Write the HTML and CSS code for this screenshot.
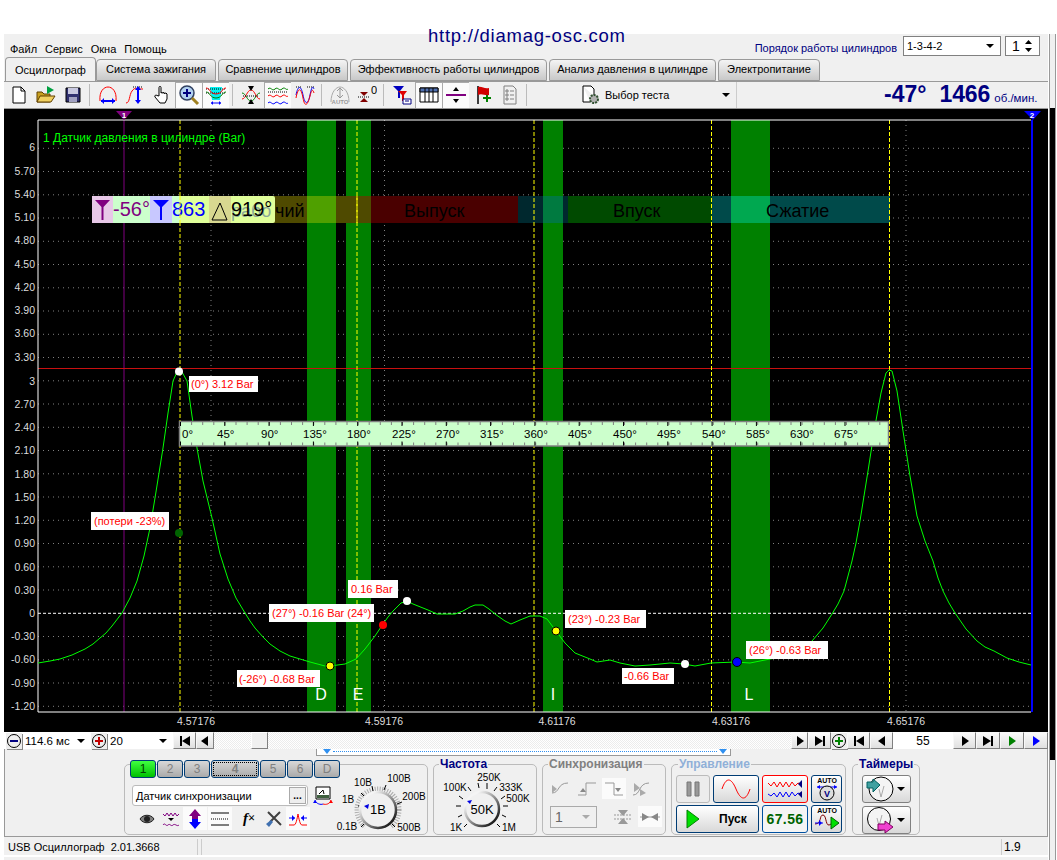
FILE: index.html
```html
<!DOCTYPE html>
<html lang="ru">
<head>
    <meta charset="UTF-8">
    <title>USB Осциллограф</title>
    <link rel="stylesheet" href="styles.css">
</head>
<body>

<svg class="defs">
    <symbol id="tri-r" viewBox="0 0 12 12"><path d="M3 1l7 5-7 5z"/></symbol>
    <symbol id="tri-l" viewBox="0 0 12 12"><path d="M9 1L2 6l7 5z"/></symbol>
    <symbol id="end-r" viewBox="0 0 12 12"><path d="M1 1l8 5-8 5zM9 1h2v10H9z"/></symbol>
    <symbol id="end-l" viewBox="0 0 12 12"><path d="M11 1L3 6l8 5zM1 1h2v10H1z"/></symbol>
    <symbol id="round-minus" viewBox="0 0 16 16"><circle cx="8" cy="8" r="6.5" fill="#eee" stroke="#000"/><path d="M4 7h8v2H4z" fill="#000080"/></symbol>
    <symbol id="round-plus" viewBox="0 0 16 16"><circle cx="8" cy="8" r="6.5" fill="#eee" stroke="#000"/><path d="M4 7h3V4h2v3h3v2H9v3H7V9H4z" fill="#c00000"/></symbol>
    <symbol id="round-plus-g" viewBox="0 0 16 16"><circle cx="8" cy="8" r="6.5" fill="#eee" stroke="#000"/><path d="M4 7h3V4h2v3h3v2H9v3H7V9H4z" fill="#008000"/></symbol>
</svg>

<div class="site-url">http://diamag-osc.com</div>

<div class="page">
    <div class="app">

        <!-- Menu -->
        <div class="menu-row">
            <div class="menu">
                <span>Файл</span><span>Сервис</span><span>Окна</span><span>Помощь</span>
            </div>
            <div class="order">
                <span class="order-label">Порядок работы цилиндров</span>
                <div class="combo order-combo"><span>1-3-4-2</span><i class="caret"></i></div>
                <div class="combo order-spin"><span>1</span>
                    <svg width="9" height="14" viewBox="0 0 9 14"><path d="M4.5 1L8 5H1zM1 9h7l-3.500 4z"/></svg>
                </div>
            </div>
        </div>

        <!-- Tabs -->
        <div class="tabs">
            <div class="tab active">Осциллограф</div>
            <div class="tab t-ign">Система зажигания</div>
            <div class="tab t-cmp">Сравнение цилиндров</div>
            <div class="tab t-eff">Эффективность работы цилиндров</div>
            <div class="tab t-prs">Анализ давления в цилиндре</div>
            <div class="tab t-pwr">Электропитание</div>
        </div>

        <!-- Toolbar -->
        <div class="toolbar">
            <div class="tool"><svg width="20" height="20" viewBox="0 0 20 20"><path d="M4 2h8l4 4v12H4z" fill="#fff" stroke="#000"/><path d="M12 2v4h4" fill="none" stroke="#000"/></svg></div>
            <div class="tool"><svg width="20" height="20" viewBox="0 0 20 20"><path d="M1 17V7h5l2 2h6v8z" fill="#c8a020" stroke="#604000"/><path d="M1 17l3-6h15l-4 6z" fill="#f0d060" stroke="#604000"/><path d="M11 1l7 4-7 4z" fill="#00a040"/></svg></div>
            <div class="tool"><svg width="20" height="20" viewBox="0 0 20 20"><path d="M3 3h14v14H3z" fill="#303070" stroke="#000"/><path d="M5 3h10v6H5z" fill="#c8c8e0"/><path d="M6 12h8v5H6z" fill="#a0a0c0"/></svg></div>
            <div class="tool-sep"></div>
            <div class="tool"><svg width="20" height="20" viewBox="0 0 20 20"><path d="M2 16C1 6 6 2 10 2s9 4 8 14" class="i-r"/><path d="M3 16h14" class="i-b2"/><path d="M3 16l3-3v6zM17 16l-3-3v6z" class="f-b"/></svg></div>
            <div class="tool"><svg width="20" height="20" viewBox="0 0 20 20"><path d="M1 18c4 0 3-8 6-12s4-2 5-2 5 0 6 0" class="i-r"/><path d="M8 2h10" class="i-d"/><path d="M13 4v12" class="i-b2"/><path d="M13 1l-3 4h6zM13 19l-3-4h6z" class="f-b"/></svg></div>
            <div class="tool"><svg width="20" height="20" viewBox="0 0 20 20"><path d="M7 11V2.500c0-1.500 2-1.500 2 0V8l1-.5V8l2-.5V8.500l2-.5 1 1v5l-2 4H8l-5-6c-1-1.500 1-2.500 2-1.500z" fill="#fff" stroke="#000"/></svg></div>
            <div class="tool pressed"><svg width="22" height="22" viewBox="0 0 22 22"><circle cx="9" cy="9" r="7" fill="#b0d0f0" stroke="#304060" stroke-width="1.500"/><path d="M5 8h3V5h2v3h3v2h-3v3H8v-3H5z" fill="#000080"/><path d="M14 14l6 6" stroke="#a08020" stroke-width="3"/></svg></div>
            <div class="tool pressed"><svg width="22" height="22" viewBox="0 0 22 22"><path d="M5 3h12l-2 13H7z" fill="#00f0f0"/><path d="M1 5h20M1 9h20" class="i-d"/><path d="M1 4c4 0 4 6 10 6s6-6 10-6" class="i-r"/><path d="M1 8c4 0 4 6 10 6s6-6 10-6" class="i-g"/><path d="M6 19h10" class="i-b"/><path d="M6 19l2-2v4zM16 19l-2-2v4z" class="f-b"/></svg></div>
            <div class="tool-sep"></div>
            <div class="tool"><svg width="20" height="20" viewBox="0 0 20 20"><path d="M1 8c4 0 5 8 9 8s5-8 9-8" class="i-g"/><path d="M1 14c4 0 5-9 9-9s5 9 9 9" class="i-r"/><path d="M2 11h16" class="i-d"/><path d="M10 6L7 1h6zM10 14l-3 5h6z"/></svg></div>
            <div class="tool pressed"><svg width="22" height="22" viewBox="0 0 22 22"><path d="M1 5c3-3 4 3 7 0s4 3 7 0 4 2 6 0" class="i-g"/><path d="M1 12c3-3 4 3 7 0s4 3 7 0 4 2 6 0" class="i-r"/><path d="M1 19c3-3 4 3 7 0s4 3 7 0 4 2 6 0" class="i-b"/><path d="M1 8h20" class="i-d"/></svg></div>
            <div class="tool"><svg width="20" height="20" viewBox="0 0 20 20"><path d="M1 2h6M12 2h7" class="i-d"/><path d="M1 10C3 0 6 0 8 10s5 10 7 0 3-8 4-6" class="i-b"/><path d="M1 13c2-11 5-11 7 0s5 6 7-2 3-6 4-3" class="i-r"/></svg></div>
            <div class="tool-sep"></div>
            <div class="tool"><svg width="20" height="20" viewBox="0 0 20 20"><path d="M1 17C1 7 6 2 10 2s9 5 9 15" fill="none" stroke="#aaa"/><path d="M10 3v9M7 6l3-3 3 3M7 10l3 3 3-3" fill="none" stroke="#999"/><text x="10" y="19" class="auto-small">AUTO</text></svg></div>
            <div class="tool"><svg width="20" height="20" viewBox="0 0 20 20"><path d="M1 12h12" class="i-d"/><path d="M7 11L3 7h8zM7 13l-4 4h8z" fill="#800000"/><text x="14" y="9" class="tool-num">0</text></svg></div>
            <div class="tool-sep"></div>
            <div class="tool"><svg width="20" height="20" viewBox="0 0 20 20"><path d="M1 1h11L8 6v7H6V6z" fill="#0000c0"/><path d="M6 6h9l-3 4v6h-2v-6z" fill="#e00000"/><path d="M11 14h8v5h-8z" fill="#fff" stroke="#000080"/><path d="M13 16h4" stroke="#000080"/></svg></div>
            <div class="tool pressed"><svg width="22" height="22" viewBox="0 0 22 22"><path d="M2 4h18v14H2z" fill="#fff" stroke="#000"/><path d="M2 4h18v4H2z" fill="#5070b0" stroke="#000"/><path d="M7 4v14M11 4v14M15 4v14" stroke="#000"/></svg></div>
            <div class="tool pressed"><svg width="22" height="22" viewBox="0 0 22 22"><path d="M1 11h20" stroke="#800080" stroke-width="2"/><path d="M11 3L8 7h6zM11 19l-3-4h6z"/></svg></div>
            <div class="tool"><svg width="20" height="20" viewBox="0 0 20 20"><path d="M5 1v18" stroke="#000" stroke-width="1.500"/><path d="M5 2c4-1 6 2 11 1v7c-4 1-7-2-11 0z" fill="#d00000"/><path d="M10 12h3v-2h2v2h3v2h-3v3h-2v-3h-3z" fill="#008000"/></svg></div>
            <div class="tool"><svg width="20" height="20" viewBox="0 0 20 20"><path d="M4 1h9l3 3v15H4z" fill="#f0f0f0" stroke="#808080"/><path d="M6 5h2v2H6zM6 9h2v2H6zM6 13h2v2H6zM10 6h4M10 10h4M10 14h4" fill="none" stroke="#808080"/></svg></div>
            <div class="tool-sep"></div>
            <div class="test-combo">
                <svg width="20" height="20" viewBox="0 0 20 20"><path d="M2 1h8l3 3v7M2 1v16h7" fill="#fff" stroke="#000"/><circle cx="13" cy="14" r="4" fill="#b0b0b0" stroke="#305030" stroke-width="2" stroke-dasharray="2 1"/></svg>
                <span>Выбор теста</span>
                <i class="caret"></i>
            </div>
            <div class="rpm">
                <b class="rpm-angle">-47°</b>
                <b class="rpm-value">1466</b>
                <span>об./мин.</span>
            </div>
        </div>

        <!-- Scope -->
        <svg class="scope" width="1044" height="623" viewBox="4 108 1044 623">
            <g class="grid">
                <path d="M38 147.300H1031M38 170.500H1031M38 193.800H1031M38 217H1031M38 240.300H1031M38 263.500H1031M38 286.800H1031M38 310H1031M38 333.300H1031M38 356.500H1031M38 379.800H1031M38 403H1031M38 426.300H1031M38 449.500H1031M38 472.800H1031M38 496H1031M38 519.300H1031M38 542.500H1031M38 565.800H1031M38 589H1031M38 635.500H1031M38 658.800H1031M38 682H1031M38 705.300H1031"/>
                <path d="M211 119V711M384.500 119V711M558 119V711M731.500 119V711M906 119V711"/>
            </g>

            <path class="band" d="M307 119h29v592h-29zM346 119h25v592h-25zM543 119h20v592h-20zM731 119h39v592h-39z"/>

            <rect x="179" y="195" width="192" height="27" fill="#4f4a00"/>
            <rect x="307" y="195" width="29" height="27" fill="#4fa000"/>
            <rect x="371" y="195" width="147" height="27" fill="#4a0000"/>
            <rect x="518" y="195" width="50" height="27" fill="#00282e"/>
            <rect x="543" y="195" width="20" height="27" fill="#007a40"/>
            <rect x="568" y="195" width="144" height="27" fill="#004a00"/>
            <rect x="712" y="195" width="178" height="27" fill="#004a4a"/>
            <rect x="731" y="195" width="39" height="27" fill="#00a850"/>
            <text x="404" y="216" class="phase">Выпуск</text>
            <text x="613" y="216" class="phase">Впуск</text>
            <text x="766" y="216" class="phase">Сжатие</text>

            <path class="mark-line" d="M124 119V711"/>
            <path class="peak-line" d="M38 367.500H1031"/>
            <path class="zero-line" d="M38 612.300H1031"/>
            <path class="trig-line" d="M180 119V711M357 119V711M534 119V711M711.500 119V711M889.500 119V711"/>

            <path class="axis" d="M1031 119H38V711H1031"/>
            <path class="axis-r" d="M1032 119V711"/>

            <path d="M116 110h16l-8 9z" fill="#800080"/>
            <text x="124" y="117" class="cursor-num">1</text>
            <path d="M1024 110h17l-8 9z" fill="#0000ff"/>
            <text x="1032" y="117" class="cursor-num">2</text>

            <g class="y-labels">
                <text x="35" y="150">6</text>
                <text x="35" y="174">5.70</text>
                <text x="35" y="197">5.40</text>
                <text x="35" y="220">5.10</text>
                <text x="35" y="243">4.80</text>
                <text x="35" y="267">4.50</text>
                <text x="35" y="290">4.20</text>
                <text x="35" y="313">3.90</text>
                <text x="35" y="336">3.60</text>
                <text x="35" y="360">3.30</text>
                <text x="35" y="384">3</text>
                <text x="35" y="407">2.70</text>
                <text x="35" y="430">2.40</text>
                <text x="35" y="453">2.10</text>
                <text x="35" y="477">1.80</text>
                <text x="35" y="500">1.50</text>
                <text x="35" y="523">1.20</text>
                <text x="35" y="546">0.90</text>
                <text x="35" y="570">0.60</text>
                <text x="35" y="593">0.30</text>
                <text x="35" y="616">0</text>
                <text x="35" y="639">-0.30</text>
                <text x="35" y="662">-0.60</text>
                <text x="35" y="686">-0.90</text>
                <text x="35" y="709">-1.20</text>
            </g>

            <g class="x-labels">
                <text x="196" y="724">4.57176</text>
                <text x="384" y="724">4.59176</text>
                <text x="557" y="724">4.61176</text>
                <text x="731" y="724">4.63176</text>
                <text x="906" y="724">4.65176</text>
            </g>

            <text x="43" y="141" class="trace-name">1 Датчик давления в цилиндре (Bar)</text>

            <polyline class="trace" points="38,662 50,660 60,658 72,654 85,648 93,643 100,637 106,632 112,625 122,612 130,597 137,580 144,555 150,527 155,497 159,472 163,447 168,412 173,380 177,371 179,369.500 182,371 187,380 192,415 197,447 203,480 212,517 220,553 228,578 236,597 245,612 250,620 255,627 263,636 270,643 280,650 290,655 300,658 310,661 325,665 330,665 345,663 356,658 365,648 375,635 383,623 388,616 393,610 401,602 407,600 413,603 428,609 437,613 455,613 463,610 470,606 475,604 483,604 489,608 495,613 505,620 511,623 520,619 530,615 540,615 547,618 556,630 565,642 575,652 590,658 597,661 610,659 620,662 635,665 650,664 670,662 684,663 695,665 711,662 736,661 750,662 770,658 790,655 802,648 812,640 823,627 832,613 838,603 844,590 852,560 856,542 860,520 864,495 868,470 875,425 881,392 886,372 889,369 892,370 897,390 903,430 910,475 917,515 925,540 933,560 938,577 943,590 949,602 955,612 966,628 977,640 985,646 994,650 1007,657 1019,661 1031,664"/>

            <!-- Degree ruler -->
            <rect class="ruler" x="179.500" y="420.500" width="709" height="24.500"/>
            <path class="ruler-minor" d="M180 422.500H888M180 443H888"/>
            <path class="ruler-major" d="M180 423H888M180 442.500H888"/>
            <g class="ruler-labels">
                <text x="182" y="437">0°</text>
                <text x="217" y="437">45°</text>
                <text x="261" y="437">90°</text>
                <text x="303" y="437">135°</text>
                <text x="347" y="437">180°</text>
                <text x="392" y="437">225°</text>
                <text x="436" y="437">270°</text>
                <text x="480" y="437">315°</text>
                <text x="524" y="437">360°</text>
                <text x="568" y="437">405°</text>
                <text x="613" y="437">450°</text>
                <text x="657" y="437">495°</text>
                <text x="702" y="437">540°</text>
                <text x="746" y="437">585°</text>
                <text x="790" y="437">630°</text>
                <text x="834" y="437">675°</text>
            </g>

            <!-- Cursor legend -->
            <path d="M92 195h21v27H92z" fill="#e8c8e8"/>
            <path d="M113 195h37v27h-37z" fill="#ccffcc"/>
            <path d="M150 195h22v27h-22z" fill="#c8c8ff"/>
            <path d="M172 195h8v27h-8z" fill="#ccffcc"/>
            <path d="M180 195h29v27h-29z" fill="#e0ff9a"/>
            <path d="M209 195h22v27h-22z" fill="#d8d890"/>
            <path d="M231 195h42a2 2 0 0 1 2 2v23a2 2 0 0 1-2 2h-42z" fill="#e0ff9a"/>
            <path d="M95 199h15l-6.500 7v13h-2v-13z" fill="#800080"/>
            <path d="M153 199h16l-7 7v13h-2v-13z" fill="#0000ff"/>
            <path d="M220 202l-8 17h15z" fill="none" stroke="#000"/>
            <text x="113" y="215" class="legend-val v-purple">-56°</text>
            <text x="172" y="215" class="legend-val v-blue">863</text>
            <text x="231" y="216" class="phase ghost">рабо</text>
            <text x="231" y="215" class="legend-val">919°</text>
            <text x="275" y="216" class="phase">чий</text>
            <path class="trig-line" d="M180 195V222M357 195V222"/>

            <g class="band-names">
                <text x="321" y="699">D</text>
                <text x="358" y="699">E</text>
                <text x="553" y="699">I</text>
                <text x="749" y="699">L</text>
            </g>

            <!-- Markers -->
            <circle cx="179" cy="370.500" r="4" fill="#fff"/>
            <circle cx="179" cy="532" r="4" fill="#006400"/>
            <circle cx="330" cy="665" r="4" fill="#ffff00" stroke="#000"/>
            <circle cx="383" cy="624" r="4" fill="#ff0000"/>
            <circle cx="407" cy="600" r="4" fill="#fff"/>
            <circle cx="556" cy="630" r="4" fill="#ffff00" stroke="#000"/>
            <circle cx="685" cy="663" r="4" fill="#fff"/>
            <circle cx="737" cy="661" r="4.500" fill="#0000ff" stroke="#000"/>

            <!-- Value labels -->
            <g class="tags">
                <rect x="189" y="375" width="69" height="16"/><text x="191" y="387">(0°) 3.12 Bar</text>
                <rect x="91" y="511" width="78" height="18"/><text x="94" y="524">(потери -23%)</text>
                <rect x="348" y="579" width="50" height="18"/><text x="351" y="592">0.16 Bar</text>
                <rect x="269" y="603" width="105" height="18"/><text x="272" y="616">(27°) -0.16 Bar (24°)</text>
                <rect x="565" y="609" width="81" height="18"/><text x="568" y="622">(23°) -0.23 Bar</text>
                <rect x="237" y="669" width="83" height="17"/><text x="239" y="682">(-26°) -0.68 Bar</text>
                <rect x="622" y="667" width="52" height="16"/><text x="624" y="679">-0.66 Bar</text>
                <rect x="746" y="640" width="82" height="18"/><text x="749" y="653">(26°) -0.63 Bar</text>
            </g>
        </svg>

        <!-- Zoom and frame navigation -->
        <div class="transport">
            <svg class="round" width="16" height="16"><use href="#round-minus"/></svg>
            <div class="pick pick-time"><span>114.6 мс</span><i class="caret"></i></div>
            <svg class="round" width="16" height="16"><use href="#round-plus"/></svg>
            <div class="pick pick-count"><span>20</span><i class="caret"></i></div>
            <div class="nav w23"><svg width="12" height="12"><use href="#end-l"/></svg></div>
            <div class="nav w18"><svg width="12" height="12"><use href="#tri-l"/></svg></div>
            <div class="track"><div class="thumb"></div></div>
            <div class="nav w17"><svg width="12" height="12"><use href="#tri-r"/></svg></div>
            <div class="nav w23"><svg width="12" height="12"><use href="#end-r"/></svg></div>
            <svg class="round" width="16" height="16"><use href="#round-plus-g"/></svg>
            <div class="nav w23"><svg width="12" height="12"><use href="#end-l"/></svg></div>
            <div class="nav w23"><svg width="12" height="12"><use href="#tri-l"/></svg></div>
            <div class="frame-no">55</div>
            <div class="nav w23"><svg width="12" height="12"><use href="#tri-r"/></svg></div>
            <div class="nav w24"><svg width="12" height="12"><use href="#end-r"/></svg></div>
            <div class="nav w24 v-green"><svg width="12" height="12"><use href="#tri-r"/></svg></div>
            <div class="nav w24 v-navy"><svg width="12" height="12"><use href="#tri-r"/></svg></div>
        </div>

        <div class="lower">
            <div class="range-row">
                <div class="range">
                    <svg width="12" height="6" viewBox="0 0 12 6"><path d="M2 0h8L6 5z" fill="#3090f0"/></svg>
                    <div class="range-dots"></div>
                    <svg width="12" height="6" viewBox="0 0 12 6"><path d="M2 0h8L6 5z" fill="#3090f0"/></svg>
                </div>
            </div>

            <div class="controls">

                <!-- Channel -->
                <div class="group g-channel">
                    <div class="ch-col">
                        <div class="channels">
                            <button class="ch w26 on">1</button>
                            <button class="ch w26">2</button>
                            <button class="ch w26">3</button>
                            <button class="ch w48 focus">4</button>
                            <button class="ch w26">5</button>
                            <button class="ch w26">6</button>
                            <button class="ch w26">D</button>
                        </div>
                        <div class="sensor-row">
                            <div class="sensor"><span>Датчик синхронизации</span><button class="dots">...</button></div>
                            <svg width="20" height="20" viewBox="0 0 20 20"><path d="M3 1h14v12H3z" fill="#fff" stroke="#000"/><path d="M4 9h12v3H4z" fill="#406040"/><path d="M6 8l4-4 1 4" fill="none" stroke="#000"/><path d="M2 14c1 4 6 5 8 4" class="i-b"/><path d="M18 14c-1 4-5 5-8 4" class="i-r"/><path d="M2 14l-2 3h4z" class="f-b"/><path d="M18 14l-2 3h4z" fill="#f00"/></svg>
                        </div>
                        <div class="chan-tools">
                            <div class="ctool w16"><svg width="16" height="14" viewBox="0 0 16 14"><path d="M1 7c3-5 11-5 14 0-3 5-11 5-14 0z" fill="#808080" stroke="#202020"/><circle cx="8" cy="7" r="3" fill="#202020"/></svg></div>
                            <div class="ctool w20"><svg width="18" height="18" viewBox="0 0 18 18"><path d="M1 4l2 2 2-3 2 3 2-3 2 3 2-3 2 3 2-2" fill="none" stroke="#800080"/><path d="M6 8h6l-3 3z"/><path d="M1 15c2-3 3 2 5 0s3 2 5 0 4 2 6 0" fill="none" stroke="#800080"/></svg></div>
                            <div class="ctool pressed w25"><svg width="18" height="22" viewBox="0 0 18 22"><path d="M9 1L3 8h3v3h6V8h3z" fill="#800080"/><path d="M9 21l-6-7h3v-3h6v3h3z" fill="#0000ff"/></svg></div>
                            <div class="ctool pressed w25"><svg width="20" height="18" viewBox="0 0 20 18"><path d="M1 3h18M1 15h18" stroke="#000"/><path d="M1 9h18" class="i-d"/></svg></div>
                            <div class="ctool w30 fx"><i>f</i><small>×</small></div>
                            <div class="ctool w20"><svg width="18" height="18" viewBox="0 0 18 18"><path d="M3 2l13 13M15 2L5 12" stroke="#404040" stroke-width="2"/><path d="M1 14l5-4 2 2-4 5z" fill="#4070b0"/></svg></div>
                            <div class="ctool pressed w25"><svg width="20" height="20" viewBox="0 0 20 20"><path d="M1 16h5c2 0 3-6 4-11 1 5 2 11 4 11h5" class="i-r"/><path d="M1 9h6M13 9h6" class="i-b"/><path d="M7 9L4 6v6zM13 9l3-3v6z" class="f-b"/></svg></div>
                        </div>
                    </div>
                    <svg class="knob" width="94" height="62" viewBox="334 772 94 62">
                        <defs>
                            <linearGradient id="rim" x1="0" y1="0" x2="1" y2="1">
                                <stop offset="0.200" stop-color="#f4f4f4"/>
                                <stop offset="0.550" stop-color="#888"/>
                                <stop offset="0.900" stop-color="#111"/>
                            </linearGradient>
                        </defs>
                        <circle class="k-ring" cx="378" cy="809" r="21"/>
                        <path class="k-gap" d="M378 809L360 833H396z"/>
                        <path class="k-tick" d="M361 792l3 3M372 785l1 5M386 784l-2 5M402 801l-5 2M364 823l-3 3M392 823l3 3M358 805h4"/>
                        <circle class="k-rim" cx="378" cy="809" r="18"/>
                        <path d="M369 803l-5 2 4 3z" fill="#0000e0"/>
                        <text x="378" y="813" class="k-val">1В</text>
                        <text x="363" y="785" class="k-lbl">10В</text>
                        <text x="399" y="781" class="k-lbl">100В</text>
                        <text x="414" y="799" class="k-lbl">200В</text>
                        <text x="348" y="802" class="k-lbl">1В</text>
                        <text x="347" y="829" class="k-lbl">0.1В</text>
                        <text x="409" y="830" class="k-lbl">500В</text>
                    </svg>
                </div>

                <!-- Frequency -->
                <div class="group g-freq">
                    <div class="group-title t-navy">Частота</div>
                    <svg width="102" height="61" viewBox="434 772 102 61">
                        <path class="k-gap" d="M482 808L462 834H502z"/>
                        <path class="k-tick" d="M468 786l3 4M478 782l1 5M487 782v6M497 786l-3 4M505 795l-4 3M508 805h-5M506 816l-4-2M500 826l-3-3M464 826l3-3M458 816l4-2M456 805h5M459 795l4 3"/>
                        <circle class="k-rim" cx="482" cy="808" r="17"/>
                        <path d="M472 799l-5 1 3 3z" fill="#0000e0"/>
                        <text x="482" y="813" class="k-val">50K</text>
                        <text x="489" y="780" class="k-lbl">250K</text>
                        <text x="455" y="790" class="k-lbl">100K</text>
                        <text x="511" y="790" class="k-lbl">333K</text>
                        <text x="518" y="801" class="k-lbl">500K</text>
                        <text x="456" y="830" class="k-lbl">1K</text>
                        <text x="509" y="830" class="k-lbl">1M</text>
                    </svg>
                </div>

                <!-- Sync, disabled -->
                <div class="group g-sync">
                    <div class="group-title t-grey">Синхронизация</div>
                    <div class="sync-row">
                        <div class="stool"><svg width="18" height="20" viewBox="0 0 18 20"><path d="M1 14c8 0 5-10 16-10" class="i-grey"/><path d="M1 6l5 4-5 4z" fill="#aaa"/></svg></div>
                        <div class="stool"><svg width="18" height="20" viewBox="0 0 18 20"><path d="M0 16h8V4h10" class="i-grey"/><path d="M5 9l-3 4h6z" fill="#888"/></svg></div>
                        <div class="stool pressed"><svg width="18" height="20" viewBox="0 0 18 20"><path d="M0 4h9v12h9" class="i-grey"/><path d="M13 13l-3-4h6z" fill="#888"/></svg></div>
                        <div class="stool"><svg width="18" height="20" viewBox="0 0 18 20"><path d="M1 16c8 0 5-12 16-12" class="i-grey"/><path d="M2 4l6 5-6 4zM8 10l6 4-6 3z" fill="#aaa"/></svg></div>
                    </div>
                    <div class="sync-row second">
                        <div class="combo sync-combo"><span>1</span><i class="caret off"></i></div>
                        <div class="stool"><svg width="18" height="20" viewBox="0 0 18 20"><path d="M0 8h18M0 12h18" class="i-grey" stroke-dasharray="2 1"/><path d="M9 9L4 3h10zM9 11l-5 6h10z" fill="#999"/></svg></div>
                        <div class="stool pressed"><svg width="20" height="20" viewBox="0 0 20 20"><path d="M0 10h20" class="i-grey"/><path d="M9 10L2 6v8zM11 10l7-4v8z" fill="#888"/></svg></div>
                    </div>
                </div>

                <!-- Control -->
                <div class="group g-ctrl">
                    <div class="group-title t-light">Управление</div>
                    <div class="ctrl-grid">
                        <button class="cbtn idle"><svg width="14" height="16" viewBox="0 0 14 16"><path d="M1 1h4v14H1zM9 1h4v14H9z" fill="#999" stroke="#777"/></svg></button>
                        <button class="cbtn"><svg width="30" height="20" viewBox="0 0 30 20"><path d="M1 10C5-2 10-2 15 10s10 12 14 0" fill="none" stroke="#f00"/></svg></button>
                        <button class="cbtn red"><svg width="34" height="22" viewBox="0 0 34 22"><path d="M0 5l3 3 3-4 3 5 3-5 3 5 3-5 3 5 3-5 3 4 3-3 2 1" fill="none" stroke="#f00"/><path d="M0 16l3 2 3-3 3 4 3-5 3 5 3-5 3 5 3-5 3 4 3-3 2 1" fill="none" stroke="#00f"/><path d="M34 2l-4 4 4 4zM34 13l-4 3 4 4z" fill="#000080"/></svg></button>
                        <button class="cbtn"><svg width="26" height="26" viewBox="0 0 26 26"><text x="13" y="7" class="auto">AUTO</text><path d="M3 11h20" class="i-b"/><path d="M3 11l3-2v4zM23 11l-3-2v4z" class="f-b"/><circle cx="13" cy="17" r="7" fill="#ddd" stroke="#000"/><text x="13" y="21" class="v-mark">V</text></svg></button>
                        <button class="cbtn start"><svg width="14" height="20" viewBox="0 0 14 20"><path d="M1 1l12 9-12 9z" fill="#00e000" stroke="#008000"/></svg><b>Пуск</b></button>
                        <button class="cbtn value">67.56</button>
                        <button class="cbtn"><svg width="26" height="26" viewBox="0 0 26 26"><text x="13" y="7" class="auto">AUTO</text><path d="M1 18c7 0 4-9 8-9s2 14 8 9" fill="none" stroke="#800000"/><path d="M1 17h8" class="i-b"/><path d="M8 17l-3-3v6z" class="f-b"/><path d="M17 11l8 6-8 6z" fill="#00e000" stroke="#006000"/></svg></button>
                    </div>
                </div>

                <!-- Timers -->
                <div class="group g-timers">
                    <div class="group-title t-navy">Таймеры</div>
                    <button class="timer">
                        <svg width="28" height="26" viewBox="0 0 28 26"><circle cx="15" cy="13" r="12" fill="#f4f4f4" stroke="#000"/><path d="M15 21l3-11M15 21l-2-8" stroke="#aaa"/><path d="M1 6h6V3l7 6-7 7v-4H1z" fill="#40a0a0" stroke="#006060"/></svg>
                        <i class="caret"></i>
                    </button>
                    <button class="timer">
                        <svg width="28" height="26" viewBox="0 0 28 26"><circle cx="13" cy="12" r="11.500" fill="#f4f4f4" stroke="#000"/><path d="M13 19l3-11M13 19l-2-8" stroke="#aaa"/><path d="M12 17h7v-3l8 6-8 6v-3h-7z" fill="#f040d0" stroke="#800060"/></svg>
                        <i class="caret"></i>
                    </button>
                </div>
            </div>
        </div>

        <!-- Status bar -->
        <div class="status">
            <div class="st-main">USB Осциллограф&nbsp; 2.01.3668</div>
            <div class="st-mid"></div>
            <div class="st-ver">1.9</div>
        </div>
    </div>

    <!-- Edge of the window behind -->
    <div class="behind">
        <div class="behind-top"></div>
        <div class="behind-black"></div>
        <div class="behind-rest"></div>
    </div>
</div>

</body>
</html>
```

FILE: styles.css
```css
/* General */
html, body { margin: 0; padding: 0; height: 860px; overflow: hidden; background: #fff; }
body { font-family: "Liberation Sans", Arial, sans-serif; font-size: 11px; color: #000; }
button { font-family: inherit; padding: 0; margin: 0; }
.defs { display: none; }
.site-url { position: absolute; left: 428px; top: 25px; font-size: 18.5px; letter-spacing: 0.75px; color: #000080; white-space: nowrap; }
.page { display: flex; padding: 34px 0 0 4px; height: 826px; }
.app { width: 1044px; flex: none; background: #f0f0f0; overflow: hidden; }
.caret { display: block; width: 0; height: 0; border: 4px solid transparent; border-top: 4px solid #000; border-bottom: 0; }
.caret.off { border-top-color: #aaa; }

/* Menu row */
.menu-row { height: 24px; display: flex; justify-content: space-between; }
.menu { display: flex; gap: 8px; padding: 9px 0 0 6px; }
.order { display: flex; align-items: flex-start; padding: 2px 8px 0 0; }
.order-label { color: #000080; margin-top: 6px; margin-right: 6px; }
.combo { display: flex; align-items: center; justify-content: space-between; box-sizing: border-box; background: #fff; border: 1px solid #808080; }
.order-combo { width: 98px; height: 20px; padding: 0 6px 0 3px; }
.order-spin { width: 35px; height: 20px; margin-left: 4px; padding: 0 6px; font-size: 14px; }

/* Tabs */
.tabs { height: 24px; display: flex; padding-left: 1px; box-sizing: border-box; border-bottom: 1px solid #999; }
.tab { height: 22px; margin-top: 1px; box-sizing: border-box; border: 1px solid #999; border-radius: 4px 4px 0 0; background: linear-gradient(#f4f4f4, #c8c8c8); line-height: 19px; text-align: center; white-space: nowrap; }
.tab.active { width: 91px; height: 24px; margin-top: -1px; background: #f0f0f0; border-bottom: 0; line-height: 24px; }
.t-ign { width: 120px; }
.t-cmp { width: 130px; margin-left: 2px; }
.t-eff { width: 197px; margin-left: 2px; }
.t-prs { width: 167px; margin-left: 2px; }
.t-pwr { width: 102px; margin-left: 2px; }

/* Toolbar */
.toolbar { height: 27px; display: flex; align-items: stretch; padding-left: 1px; border-bottom: 1px solid #999; box-sizing: border-box; }
.tool { width: 27px; display: flex; align-items: center; justify-content: center; }
.tool.pressed { background: #fbfbfb; box-shadow: inset 1px 1px 0 #aaa; }
.tool-sep { width: 8px; }
.tool-sep::after { content: ""; display: block; width: 1px; height: 22px; margin: 2px 0 0 3px; background: #bbb; }
.i-r { fill: none; stroke: #f00; }
.i-g { fill: none; stroke: #008000; }
.i-b { fill: none; stroke: #00f; }
.i-b2 { fill: none; stroke: #00f; stroke-width: 2; }
.i-d { fill: none; stroke: #000; stroke-dasharray: 1 1; }
.i-grey { fill: none; stroke: #999; }
.f-b { fill: #00f; }
.auto-small { font-size: 6px; font-weight: bold; fill: #999; text-anchor: middle; }
.tool-num { font-size: 11px; fill: #000; }
.test-combo { width: 206px; display: flex; align-items: center; padding-left: 50px; box-sizing: border-box; border-right: 1px solid #ccc; }
.test-combo span { margin-left: 4px; flex: 1; }
.test-combo .caret { margin-right: 6px; }
.rpm { display: flex; align-items: baseline; color: #000080; margin-left: 145px; }
.rpm b { font-size: 23px; line-height: 25px; }
.rpm-angle { margin-left: 2px; }
.rpm-value { margin-left: 13px; letter-spacing: -0.1px; }
.rpm span { font-size: 11.5px; margin-left: 4px; }

/* Scope */
.scope { display: block; background: #000; }
.grid path { fill: none; stroke: #808080; stroke-dasharray: 1 4; }
.band { fill: #008000; }
.mark-line { stroke: #800080; fill: none; }
.peak-line { stroke: #c81010; fill: none; }
.zero-line { stroke: #fff; fill: none; stroke-dasharray: 3 2; }
.trig-line { stroke: #ffff00; fill: none; stroke-dasharray: 4 2; }
.axis { fill: none; stroke: #fff; }
.axis-r { fill: none; stroke: #00f; stroke-width: 2; }
.cursor-num { font-size: 8px; font-weight: bold; fill: #fff; text-anchor: middle; }
.phase { font-size: 18px; fill: #000; }
.phase.ghost { fill: #8aa898; }
.y-labels text { font-size: 10.5px; fill: #ddd; text-anchor: end; }
.x-labels text { font-size: 10.5px; fill: #ddd; text-anchor: middle; }
.trace-name { font-size: 12px; fill: #00ff00; }
.trace { fill: none; stroke: #00ff00; }
.ruler { fill: #ccffcc; stroke: #808080; stroke-width: 1.5; }
.ruler-minor { fill: none; stroke: #808080; stroke-width: 3; stroke-dasharray: 1 10.100; }
.ruler-major { fill: none; stroke: #000; stroke-width: 4; stroke-dasharray: 1 43.300; }
.ruler-labels text { font-size: 11.5px; fill: #000; }
.legend-val { font-size: 20px; fill: #000; }
.v-purple { fill: #800080; }
.v-blue { fill: #0000ff; }
.band-names text { font-size: 16px; fill: #fff; text-anchor: middle; }
.tags rect { fill: #fff; }
.tags text { font-size: 11px; fill: #f00; }

/* Transport */
.transport { height: 17px; display: flex; align-items: stretch; padding-left: 2px; background: #fff; }
.round { flex: none; background: #eee; box-shadow: 1px 1px 0 #888; margin-top: 1px; }
.pick { display: flex; align-items: center; justify-content: space-between; box-sizing: border-box; font-size: 11.5px; padding: 0 6px 0 3px; }
.pick-time { width: 69px; }
.pick-count { width: 66px; padding-right: 6px; }
.nav { display: flex; align-items: center; justify-content: center; box-sizing: border-box; background: linear-gradient(#fafafa, #e0e0e0); border: 1px solid #f8f8f8; border-right-color: #808080; border-bottom-color: #808080; flex: none; }
.w17 { width: 17px; }
.w18 { width: 18px; }
.w23 { width: 23px; }
.w24 { width: 24px; }
.v-green { fill: #008000; }
.v-navy { fill: #0000ff; }
.track { flex: 1; padding-left: 37px; background: repeating-conic-gradient(#fff 0 25%, #ececec 0 50%) 0 0 / 2px 2px; }
.thumb { width: 17px; height: 17px; box-sizing: border-box; background: #f0f0f0; border: 1px solid #fff; border-right-color: #808080; border-bottom-color: #808080; }
.frame-no { width: 60px; text-align: center; font-size: 12px; line-height: 18px; background: #fff; }

/* Lower panel */
.lower { height: 88px; box-sizing: border-box; border-left: 1px solid #999; border-right: 1px solid #999; border-bottom: 1px solid #999; }
.range-row { height: 8px; padding-left: 311px; }
.range { width: 415px; height: 7px; box-sizing: border-box; display: flex; justify-content: space-between; background: #fff; border: 1px solid #999; border-top: 0; padding: 0 1px 0 4px; }
.range-dots { flex: 1; height: 1px; margin-top: 2px; border-top: 1px dotted #3090f0; }

.controls { display: flex; align-items: flex-start; padding: 7px 0 0 119px; }
.group { box-sizing: border-box; height: 71px; border: 1px solid #bbb; border-radius: 5px; margin-right: 5px; }
.group-title { width: fit-content; margin: -9px 0 0 5px; padding: 0 1px; background: #f0f0f0; font-size: 12px; line-height: 16px; font-weight: bold; }
.t-navy { color: #000080; }
.t-grey { color: #808080; }
.t-light { color: #90b0d8; }

.g-channel { width: 304px; display: flex; }
.ch-col { width: 209px; flex: none; }
.channels { display: flex; gap: 1px; margin: -5px 0 0 5px; width: 216px; }
.ch { height: 18px; box-sizing: border-box; border: 1px solid #003c74; border-radius: 3px; background: linear-gradient(#d8d8d8, #aaa); color: #808080; font-size: 12px; }
.w26 { width: 26px; }
.w48 { width: 48px; }
.ch.on { background: linear-gradient(#40ff40, #00c000); color: #004000; }
.ch.focus { font-weight: bold; outline: 1px dotted #000; outline-offset: -3px; }
.sensor-row { display: flex; align-items: center; margin: 7px 0 0 7px; width: 210px; }
.sensor { width: 176px; height: 21px; flex: none; box-sizing: border-box; display: flex; align-items: center; justify-content: space-between; background: #fff; border: 1px solid #bbb; border-radius: 3px; padding: 0 1px 0 3px; margin-right: 5px; }
.sensor-row svg { flex: none; }
.dots { width: 17px; height: 17px; border: 1px solid #aaa; background: #eee; font-size: 10px; font-weight: bold; line-height: 8px; }
.chan-tools { display: flex; align-items: stretch; height: 23px; margin: 1px 0 0 14px; width: 190px; }
.ctool { display: flex; align-items: center; justify-content: center; flex: none; margin-right: 2px; }
.ctool.pressed, .stool.pressed { background: #fbfbfb; }
.w16 { width: 16px; margin-right: 6px; }
.w20 { width: 20px; }
.w25 { width: 24px; margin-right: 1px; }
.w30 { width: 24px; margin-left: 4px; margin-right: 3px; }
.fx { font-family: "Liberation Serif", serif; font-size: 15px; font-weight: bold; }
.knob { display: block; margin-top: 8px; flex: none; }
.k-ring { fill: none; stroke: #aaa; stroke-width: 5; stroke-dasharray: 1 1.500; }
.k-gap { fill: #f0f0f0; }
.k-tick { fill: none; stroke: #000; }
.k-rim { fill: #f0f0f0; stroke: url(#rim); stroke-width: 2.500; }
.k-val { font-size: 13px; text-anchor: middle; fill: #000; }
.k-lbl { font-size: 10px; text-anchor: middle; fill: #000; }

.g-freq { width: 104px; }
.g-freq svg { display: block; margin-top: 1px; }
.g-sync { width: 124px; }
.sync-row { display: flex; align-items: stretch; padding-left: 5px; margin-top: 6px; }
.sync-row.second { margin-top: 7px; padding-left: 7px; }
.stool { width: 24px; height: 21px; display: flex; align-items: center; justify-content: center; margin-right: 3px; }
.sync-combo { width: 47px; height: 22px; padding: 0 6px 0 4px; font-size: 14px; color: #666; background: #f0f0f0; border-color: #aaa; margin-right: 14px; }

.g-ctrl { width: 175px; }
.g-ctrl .group-title { margin-left: 6px; }
.ctrl-grid { display: grid; grid-template-columns: 34px 46px 46px 31px; grid-auto-rows: 28px; gap: 2px 3px; padding: 3px 0 0 4px; }
.cbtn { box-sizing: border-box; display: flex; align-items: center; justify-content: center; border: 1px solid #003c74; border-radius: 3px; background: linear-gradient(#fff, #d8d8d8); }
.cbtn.idle { border-color: #bbb; background: #ececec; }
.cbtn.red { border-color: #f00; }
.cbtn.start { grid-column: span 2; justify-content: flex-start; padding-left: 9px; }
.cbtn.start b { font-size: 12px; margin-left: 19px; }
.cbtn.value { color: #006400; font-size: 14px; font-weight: bold; background: #f4f4f4; letter-spacing: 0.4px; border-color: #0050a0; }
.auto { font-size: 7px; font-weight: bold; text-anchor: middle; fill: #000; }
.v-mark { font-size: 9px; font-weight: bold; text-anchor: middle; fill: #000080; }

.g-timers { width: 68px; margin-right: 0; margin-left: 1px; }
.timer { width: 49px; height: 28px; display: flex; align-items: center; justify-content: space-between; box-sizing: border-box; margin: 3px 0 0 9px; padding: 0 5px 0 3px; background: linear-gradient(#fff, #d8d8d8); border: 1px solid #808080; border-radius: 3px; }
.g-timers .group-title + .timer { margin-top: 3px; }

/* Status bar */
.status { height: 16px; display: flex; margin-top: 2px; border-bottom: 1px solid #fff; line-height: 17px; overflow: hidden; box-shadow: 0 1px 0 #fff; }
.st-main { width: 189px; padding-left: 4px; flex: none; border-right: 1px solid #ccc; }
.st-mid { width: 799px; margin-left: 3px; border-left: 1px solid #ccc; border-right: 1px solid #ccc; }
.st-ver { padding-left: 2px; flex: 1; font-size: 12px; }

/* Window behind */
.behind { width: 5px; flex: none; margin-left: 1px; display: flex; flex-direction: column; border-left: 1px solid #999; border-right: 1px solid #999; }
.behind-top { height: 74px; background: #f0f0f0; }
.behind-black { height: 652px; background: #000; }
.behind-rest { flex: 1; background: #f0f0f0; }
```
